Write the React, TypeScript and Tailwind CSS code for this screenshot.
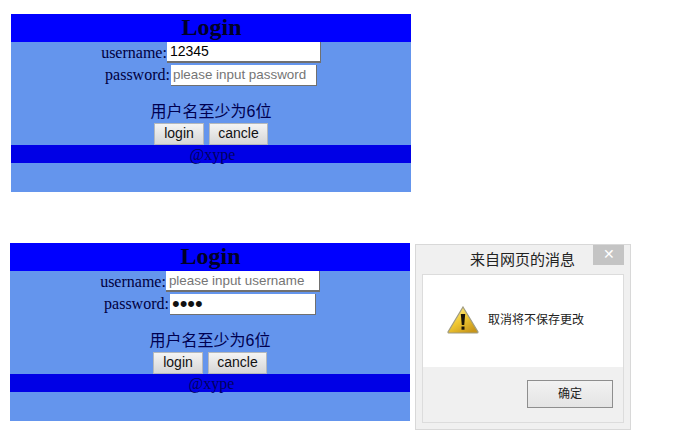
import * as React from "react";

const serif = "font-['Liberation_Serif','Noto_Sans_CJK_SC',serif]";
const sans = "font-['Liberation_Sans','Noto_Sans_CJK_SC',sans-serif]";
const btn = `h-[22px] pb-[2px] border border-[#b4b8bc] bg-gradient-to-b from-[#f4f4f4] to-[#d6d6d6] text-[14px] leading-none text-[#111] ${sans}`;

function LoginPanel(props: { username?: string; password?: string }) {
  return (
    <div className={`w-[400px] h-[178px] shrink-0 bg-[#6495ed] flex flex-col ${serif} text-[#000040]`}>
      <div className="h-[28px] pl-[1px] bg-[#0000ff] text-center text-[24px] font-bold leading-[27px] text-[#000028]">Login</div>
      <div className="h-[22px] flex justify-center items-center text-[16px]">
        <span>username:</span>
        <input
          readOnly
          value={props.username ?? ""}
          placeholder="please input username"
          className={`w-[154px] h-[21px] mt-[-1px] px-[3px] bg-white border-b-2 border-r border-[#707070] text-[14px] text-black outline-none placeholder:text-[13.4px] placeholder:text-[#757575] ${sans}`}
        />
      </div>
      <div className="h-[22px] flex justify-center items-center text-[16px]">
        <span>password:</span>
        <input
          readOnly
          type={props.password ? "password" : "text"}
          value={props.password ?? ""}
          placeholder="please input password"
          className={`w-[146px] h-[21px] ml-[1px] px-[2px] bg-white border-b border-r border-[#707070] ${props.password ? "text-[22px] leading-none" : "text-[14px]"} text-[#111] outline-none placeholder:text-[13.4px] placeholder:text-[#757575] ${sans}`}
        />
      </div>
      <div className={`mt-[15px] h-[22px] text-center text-[16px] leading-[22px] text-[#000050] ${sans}`}>用户名至少为6位</div>
      <div className="h-[22px] flex justify-center gap-[5px]">
        <button className={`w-[50px] ${btn}`}>login</button>
        <button className={`w-[59px] ${btn}`}>cancle</button>
      </div>
      <div className="h-[18px] pl-[3px] bg-[#0000e6] text-center text-[16px] leading-[19px] text-[#000060]">@xype</div>
    </div>
  );
}

function WarningIcon() {
  return (
    <svg width="32" height="28" viewBox="0 0 32 28">
      <defs>
        <linearGradient id="warn" x1="0" y1="0" x2="0.7" y2="1">
          <stop offset="0" stopColor="#fff4a0" />
          <stop offset="0.55" stopColor="#f0c832" />
          <stop offset="1" stopColor="#c8961a" />
        </linearGradient>
      </defs>
      <path d="M16 1 L31 26 Q31 27 30 27 L2 27 Q1 27 1 26 Z" fill="url(#warn)" stroke="#a09c80" strokeWidth="1.2" />
      <path d="M13.8 8 L18.2 8 L17.2 19 L14.8 19 Z" fill="#1a1408" />
      <rect x="14.5" y="20.5" width="3" height="3.2" fill="#1a1408" />
    </svg>
  );
}

function MessageDialog() {
  return (
    <div className={`w-[216px] h-[186px] ml-[5px] mt-[1px] bg-[#f0f0f0] border border-[#d8d8d8] flex flex-col ${sans}`}>
      <div className="h-[29px] flex shrink-0">
        <div className="flex-1 pl-[54px] pt-[6px] text-[15px] leading-[18px] text-[#222]">来自网页的消息</div>
        <div className="w-[31px] h-[20px] mr-[6px] bg-[#c4c4c4] text-white text-[14px] leading-[19px] text-center">✕</div>
      </div>
      <div className="mx-[6px] mb-[6px] flex-1 border border-[#dcdcdc] flex flex-col">
        <div className="h-[92px] bg-white flex items-center pl-[24px] pb-[2px]">
          <WarningIcon />
          <span className="ml-[9px] text-[12px] text-[#222]">取消将不保存更改</span>
        </div>
        <div className="flex-1 bg-[#f0f0f0] flex justify-end items-start pt-[13px] pr-[10px]">
          <button className="w-[86px] h-[28px] border border-[#8e8e8e] bg-gradient-to-b from-[#f2f2f2] to-[#e4e4e4] text-[12px] text-[#222]">确定</button>
        </div>
      </div>
    </div>
  );
}

export default function App() {
  return (
    <div className="w-[683px] h-[447px] overflow-hidden bg-white">
      <div className="pt-[14px] pl-[11px]">
        <LoginPanel username="12345" />
      </div>
      <div className="mt-[51px] pl-[10px] flex items-start">
        <LoginPanel password="1234" />
        <MessageDialog />
      </div>
    </div>
  );
}
